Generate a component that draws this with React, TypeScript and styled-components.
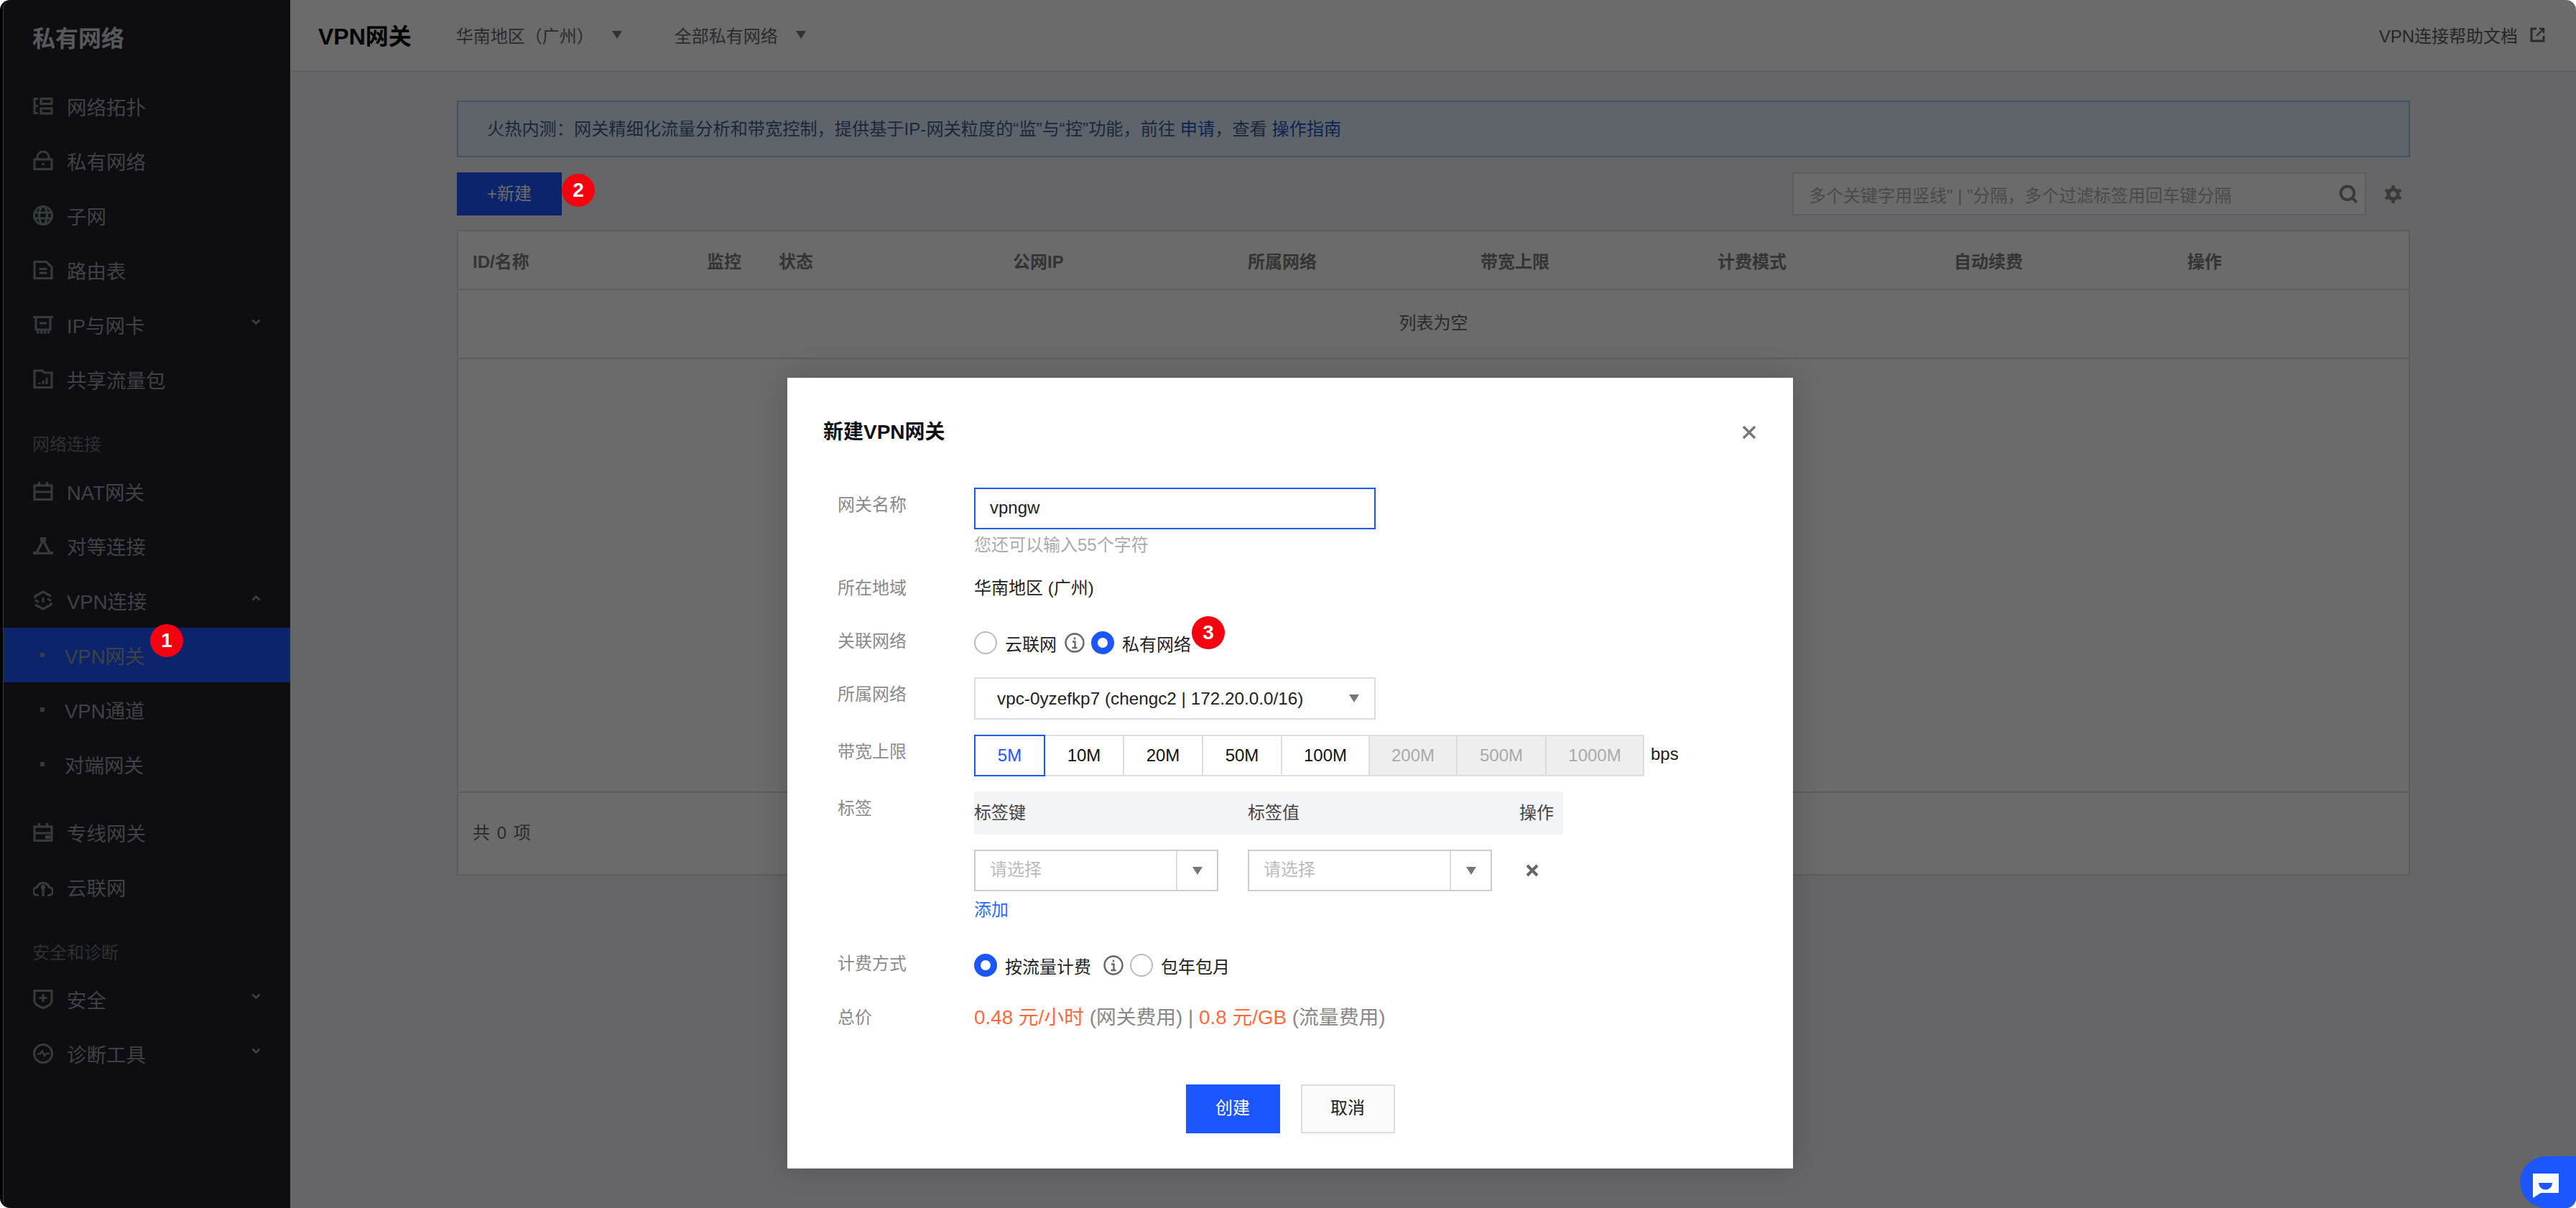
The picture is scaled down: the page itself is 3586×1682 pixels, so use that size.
import React from "react";
import styled, { createGlobalStyle } from "styled-components";
import { Search } from "lucide-react";

const GlobalStyle = createGlobalStyle`
  html, body {
    margin: 0;
    height: 100%;
    overflow: hidden;
    background: #fff;
  }
  * {
    box-sizing: border-box;
  }
  body {
    font-family: "Liberation Sans", "Noto Sans CJK SC", sans-serif;
    font-size: 24px;
  }
`;

const Shell = styled.div`
  position: relative;
  display: flex;
  width: 3586px;
  height: 1682px;
  border-left: 4px solid #000;
  border-radius: 14px;
  overflow: hidden;
`;

const Overlay = styled.div`
  position: absolute;
  inset: 0;
  z-index: 10;
  background: rgba(0, 0, 0, 0.58);
`;

const Badge = styled.span<{ $left: number; $top: number }>`
  position: absolute;
  left: ${(p) => p.$left}px;
  top: ${(p) => p.$top}px;
  z-index: 30;
  display: flex;
  align-items: center;
  justify-content: center;
  width: 46px;
  height: 46px;
  border-radius: 50%;
  background: #f5000f;
  color: #fff;
  font-size: 28px;
  font-weight: 700;
`;

/* sidebar */

const Sidebar = styled.aside`
  flex: none;
  width: 400px;
  border-left: 1px solid #8d8d8d;
  background: #1f212b;
  color: #979ea5;
`;

const SideTitle = styled.div`
  height: 110px;
  padding: 34px 0 0 40px;
  color: #cfd1d6;
  font-size: 32px;
  font-weight: 700;
  line-height: 40px;
`;

const GroupTitle = styled.div<{ $top: number }>`
  height: 80px;
  padding: ${(p) => p.$top}px 0 0 40px;
  color: #6d7179;
  font-size: 24px;
  line-height: 50px;
`;

const NavItem = styled.div<{ $active?: boolean; $gapBelow?: number }>`
  position: relative;
  display: flex;
  align-items: center;
  gap: 19px;
  height: 76px;
  margin-bottom: ${(p) => p.$gapBelow || 0}px;
  padding-left: 41px;
  font-size: 27.5px;
  white-space: nowrap;
  background: ${(p) => (p.$active ? "#1c56ff" : "transparent")};
`;

const SubItem = styled(NavItem)`
  gap: 28px;
  padding-left: 51px;
`;

const Dot = styled.i`
  width: 6px;
  height: 6px;
  background: currentColor;
  opacity: 0.8;
`;

const NavIcon = styled.svg`
  flex: none;
  width: 28px;
  height: 28px;
  fill: none;
  stroke: #7e8a91;
  stroke-width: 3.2;
`;

const Chevron = styled.svg<{ $up?: boolean }>`
  position: absolute;
  right: 41px;
  top: 30px;
  width: 13px;
  height: 9px;
  fill: none;
  stroke: #979ea5;
  stroke-width: 2.6;
  transform: ${(p) => (p.$up ? "rotate(180deg)" : "none")};
`;

const icons: Record<string, React.ReactNode> = {
  topology: (
    <>
      <path d="M2 2v23M2 3.5h5M2 13.5h5M2 23.5h5" />
      <rect x="11" y="3.5" width="15" height="7" />
      <rect x="11" y="17" width="15" height="7" />
    </>
  ),
  lock: (
    <>
      <rect x="2" y="12" width="24" height="13.5" />
      <path d="M6 12V9a8 8 0 0 1 16 0v3" />
      <path d="M12.5 17h3v3h-3z" fill="#7e8a91" stroke="none" />
    </>
  ),
  globe: (
    <>
      <circle cx="14" cy="14" r="12.5" />
      <ellipse cx="14" cy="14" rx="5.5" ry="12.5" />
      <path d="M2 10h24M2 18h24" />
    </>
  ),
  doc: (
    <>
      <path d="M2 2.5h16.5L26 10v15.5H2z" />
      <path d="M8.5 12.5h11M8.5 18h11" />
    </>
  ),
  card: (
    <>
      <path d="M0 3.5h28M4 3.5v17.5h20V3.5M9 12h10" />
      <path d="M5 24.5h18" strokeDasharray="3.5 1.5" strokeWidth="4" />
    </>
  ),
  folder: (
    <>
      <path d="M2 2h11l3 3h10v20.5H2z" />
      <path d="M9 21v-2M14 21v-5M19 21v-9" strokeWidth="3" />
    </>
  ),
  gateway: (
    <>
      <rect x="2" y="6" width="24" height="19.5" />
      <path d="M8.5 1v5M19.5 1v5M2 15h24" />
    </>
  ),
  peer: (
    <>
      <path d="M14 6L4.5 24.5h19z" />
      <path d="M10 2h8v6h-8zM0 22h8v4H0zM20 22h8v4h-8z" fill="#7e8a91" stroke="none" />
    </>
  ),
  vpn: (
    <>
      <path d="M3 11V8l11-6 11 6M25 17v3l-11 6-11-6" />
      <path d="M3 13.5l5 3M25 14.5l-5-3" />
      <path d="M12.5 10h3v7h-3z" fill="#7e8a91" stroke="none" />
    </>
  ),
  line: (
    <>
      <rect x="2" y="6" width="24" height="19.5" />
      <path d="M8.5 1v5M19.5 1v5M2 15h24" />
      <path d="M17 18h7v5h-7z" fill="#7e8a91" stroke="none" />
    </>
  ),
  cloud: (
    <>
      <path d="M8 25.5H6.5a5.5 5.5 0 0 1-1-11 9 9 0 0 1 17 0 5.5 5.5 0 0 1-1 11H20" />
      <path d="M14 27V15" strokeWidth="3.6" />
      <circle cx="14" cy="14" r="3.2" fill="#7e8a91" stroke="none" />
    </>
  ),
  shield: (
    <>
      <path d="M2 2.5h24v14c0 4.5-5 7.5-12 10-7-2.5-12-5.5-12-10z" />
      <path d="M14 7v11M8.5 12.5h11" />
    </>
  ),
  pulse: (
    <>
      <circle cx="14" cy="14" r="12.5" />
      <path d="M6 14.5h4l3-4 3 6.5 2.5-3H23" strokeWidth="2.6" />
    </>
  ),
};

const Item = ({ icon, label, open }: { icon: string; label: string; open?: boolean | "up" }) => (
  <NavItem>
    <NavIcon viewBox="0 0 28 28">{icons[icon]}</NavIcon>
    {label}
    {open && (
      <Chevron viewBox="0 0 13 9" $up={open === "up"}>
        <path d="M1.5 1.5L6.5 6.5L11.5 1.5" />
      </Chevron>
    )}
  </NavItem>
);

const Side = () => (
  <Sidebar>
    <SideTitle>私有网络</SideTitle>
    <Item icon="topology" label="网络拓扑" />
    <Item icon="lock" label="私有网络" />
    <Item icon="globe" label="子网" />
    <Item icon="doc" label="路由表" />
    <Item icon="card" label="IP与网卡" open />
    <Item icon="folder" label="共享流量包" />
    <GroupTitle $top={28}>网络连接</GroupTitle>
    <Item icon="gateway" label="NAT网关" />
    <Item icon="peer" label="对等连接" />
    <Item icon="vpn" label="VPN连接" open="up" />
    <SubItem $active>
      <Dot />
      VPN网关
      <Badge $left={204} $top={-5}>1</Badge>
    </SubItem>
    <SubItem>
      <Dot />
      VPN通道
    </SubItem>
    <SubItem $gapBelow={19}>
      <Dot />
      对端网关
    </SubItem>
    <Item icon="line" label="专线网关" />
    <Item icon="cloud" label="云联网" />
    <GroupTitle $top={29}>安全和诊断</GroupTitle>
    <Item icon="shield" label="安全" open />
    <Item icon="pulse" label="诊断工具" open />
  </Sidebar>
);

/* main page */

const Main = styled.main`
  flex: 1;
  display: flex;
  flex-direction: column;
  min-width: 0;
  background: #f3f4f7;
`;

const Header = styled.header`
  flex: none;
  display: flex;
  align-items: center;
  height: 100px;
  padding: 0 43px 2px 39px;
  border-bottom: 2px solid #e2e2e2;
  background: #fff;
  color: #666;
`;

const PageTitle = styled.h1`
  margin: 0 62px 0 0;
  color: #000;
  font-size: 32px;
  font-weight: 700;
`;

const Caret = styled.i<{ $color?: string }>`
  flex: none;
  width: 0;
  height: 0;
  border-style: solid;
  border-width: 11px 7.5px 0;
  border-color: ${(p) => p.$color || "#777"} transparent transparent;
`;

const HeaderPick = styled.div`
  display: flex;
  align-items: center;
  gap: 25px;
  margin-right: 73px;
`;

const HelpLink = styled.div`
  display: flex;
  align-items: center;
  gap: 17px;
  margin-left: auto;
  color: #5c5c5c;
`;

const Content = styled.div`
  flex: 1;
  display: flex;
  flex-direction: column;
  padding: 40px 231px 463px 232px;
`;

const Notice = styled.div`
  flex: none;
  height: 79px;
  margin-bottom: 21px;
  padding-left: 40px;
  border: 2px solid #a3c4f5;
  background: #e2eefc;
  color: #3f5f8f;
  font-size: 24.2px;
  line-height: 75px;
`;

const NoticeLink = styled.span`
  color: #1c56c8;
`;

const Toolbar = styled.div`
  flex: none;
  display: flex;
  align-items: center;
  height: 60px;
  margin-bottom: 20px;
  padding-right: 10px;
`;

const NewButton = styled.div`
  position: relative;
  width: 146px;
  height: 60px;
  margin-right: auto;
  background: #1c56ff;
  color: #fff;
  line-height: 60px;
  text-align: center;
`;

const SearchBox = styled.div`
  display: flex;
  align-items: center;
  justify-content: space-between;
  width: 799px;
  height: 60px;
  margin-right: 24px;
  padding: 0 9px 0 21px;
  border: 2px solid #ddd;
  background: #fff;
  color: #b0b0b0;
`;

const GearIcon = styled.svg`
  flex: none;
  width: 27px;
  height: 27px;
  fill: none;
  stroke: #8a8a8a;
`;

const Table = styled.div`
  flex: 1;
  display: flex;
  flex-direction: column;
  border: 2px solid #dcdcdc;
  background: #fff;
`;

const TableHead = styled.div`
  flex: none;
  display: grid;
  grid-template-columns: 326px 100px 326px 327px 324px 330px 329px 325px 1fr;
  align-items: center;
  height: 82px;
  padding-left: 20px;
  border-bottom: 2px solid #dcdcdc;
  color: #7c7c7c;
  font-weight: 700;
`;

const EmptyRow = styled.div`
  flex: none;
  height: 96px;
  border-bottom: 2px solid #dcdcdc;
  color: #666;
  line-height: 92px;
  text-align: center;
`;

const TableFoot = styled.div`
  flex: none;
  height: 115px;
  margin-top: auto;
  padding-left: 20px;
  border-top: 2px solid #dcdcdc;
  color: #666;
  line-height: 112px;
  word-spacing: 3px;
`;

const ChatButton = styled.div`
  position: absolute;
  right: 0;
  bottom: 0;
  z-index: 30;
  width: 78px;
  height: 72px;
  padding: 24px 0 0 18px;
  border-radius: 36px 0 0 36px;
  background: #1c56ff;
`;

const columns = ["ID/名称", "监控", "状态", "公网IP", "所属网络", "带宽上限", "计费模式", "自动续费", "操作"];

const Page = () => (
  <Main>
    <Header>
      <PageTitle>VPN网关</PageTitle>
      <HeaderPick>
        华南地区（广州）
        <Caret />
      </HeaderPick>
      <HeaderPick>
        全部私有网络
        <Caret />
      </HeaderPick>
      <HelpLink>
        VPN连接帮助文档
        <svg width="21" height="21" viewBox="0 0 21 21" fill="none" stroke="#666" strokeWidth="3">
          <path d="M9 2H2v17h17v-7" />
          <path d="M19 2L9 12M13 2h6v6" strokeWidth="2.4" />
        </svg>
      </HelpLink>
    </Header>
    <Content>
      <Notice>
        火热内测：网关精细化流量分析和带宽控制，提供基于IP-网关粒度的“监”与“控”功能，前往 <NoticeLink>申请</NoticeLink>，查看 <NoticeLink>操作指南</NoticeLink>
      </Notice>
      <Toolbar>
        <NewButton>
          +新建
          <Badge $left={146} $top={2}>2</Badge>
        </NewButton>
        <SearchBox>
          多个关键字用竖线" | "分隔，多个过滤标签用回车键分隔
          <Search size={28} color="#8a8a8a" strokeWidth={3.4} />
        </SearchBox>
        <GearIcon viewBox="0 0 28 28">
          <circle cx="14" cy="14" r="7" strokeWidth="5" />
          <path d="M14 1v6M14 21v6M2.7 7.5l5 3M20.3 17.5l5 3M2.7 20.5l5-3M20.3 10.5l5-3" strokeWidth="4.4" />
        </GearIcon>
      </Toolbar>
      <Table>
        <TableHead>
          {columns.map((name) => (
            <span key={name}>{name}</span>
          ))}
        </TableHead>
        <EmptyRow>列表为空</EmptyRow>
        <TableFoot>共 0 项</TableFoot>
      </Table>
    </Content>
    <ChatButton>
      <svg width="36" height="34" viewBox="0 0 36 34">
        <path d="M0 0H36V27H11L0 34Z" fill="#fff" />
        <path d="M8 13h19a9.5 9.5 0 0 1-19 0z" fill="#1c56ff" />
      </svg>
    </ChatButton>
  </Main>
);

/* dialog */

const Dialog = styled.section`
  position: absolute;
  left: 1092px;
  top: 526px;
  z-index: 20;
  width: 1400px;
  height: 1101px;
  padding: 56px 0 0 50px;
  background: #fff;
  box-shadow: 0 0 40px rgba(0, 0, 0, 0.18);
  color: #222;
`;

const DialogTitle = styled.h2`
  margin: 0 0 57px;
  color: #111;
  font-size: 28px;
  font-weight: 700;
  line-height: 40px;
`;

const CloseIcon = styled.svg`
  position: absolute;
  right: 51px;
  top: 66px;
  width: 20px;
  height: 20px;
  stroke: #777;
  stroke-width: 3.4;
`;

const Form = styled.div`
  display: flex;
  flex-direction: column;
  gap: 21px;
  margin-left: 20px;
`;

const Row = styled.div<{ $height: number }>`
  display: grid;
  grid-template-columns: 190px 1fr;
  height: ${(p) => p.$height}px;
`;

const Label = styled.div`
  color: #8a8a8a;
  line-height: 48px;
`;

const Plain = styled.div`
  line-height: 48px;
`;

const TextInput = styled.div`
  width: 559px;
  height: 58px;
  padding-left: 20px;
  border: 2px solid #1c56ff;
  line-height: 52px;
`;

const Hint = styled.div`
  color: #aaa;
  line-height: 44px;
`;

const RadioRow = styled.div`
  position: relative;
  display: flex;
  align-items: center;
  height: 52px;
`;

const Radio = styled.i<{ $checked?: boolean }>`
  flex: none;
  width: 32px;
  height: 32px;
  margin-right: 11px;
  border-radius: 50%;
  border: ${(p) => (p.$checked ? "9px solid #1c56ff" : "2px solid #bbb")};
`;

const InfoIcon = styled.svg<{ $gap: number }>`
  flex: none;
  width: 28px;
  height: 28px;
  margin: 0 9px 0 ${(p) => p.$gap}px;
  fill: none;
  stroke: #666;
  stroke-width: 2.4;
`;

const SelectBox = styled.div`
  display: flex;
  align-items: center;
  justify-content: space-between;
  width: 559px;
  height: 59px;
  padding: 0 21px 0 30px;
  border: 2px solid #ddd;
  font-size: 24.3px;
`;

const Segments = styled.div`
  display: flex;
  align-items: flex-start;
`;

const Segment = styled.div<{ $width: number; $selected?: boolean; $disabled?: boolean }>`
  position: relative;
  z-index: ${(p) => (p.$selected ? 1 : 0)};
  width: ${(p) => p.$width}px;
  height: 58px;
  margin-right: -2px;
  border: 2px solid ${(p) => (p.$selected ? "#1c56ff" : "#ddd")};
  background: ${(p) => (p.$disabled ? "#eee" : "#fff")};
  color: ${(p) => (p.$selected ? "#1c56ff" : p.$disabled ? "#aaa" : "#111")};
  line-height: 54px;
  text-align: center;
`;

const Unit = styled.span`
  margin: -2px 0 0 11px;
  line-height: 58px;
`;

const TagHead = styled.div`
  display: grid;
  grid-template-columns: 381px 1fr auto;
  width: 820px;
  height: 60px;
  padding-right: 13px;
  background: #f3f4f8;
  color: #444;
  line-height: 60px;
`;

const TagRow = styled.div`
  display: flex;
  align-items: center;
  gap: 41px;
  height: 58px;
  margin-top: 21px;
`;

const TagSelect = styled.div`
  display: grid;
  grid-template-columns: 1fr 57px;
  width: 340px;
  height: 58px;
  border: 2px solid #ccc;
  color: #bbb;
  line-height: 52px;
`;

const TagValue = styled.span`
  padding-left: 20px;
`;

const TagArrow = styled.span`
  display: flex;
  align-items: center;
  justify-content: center;
  border-left: 2px solid #ddd;
`;

const RemoveIcon = styled.svg`
  width: 18px;
  height: 18px;
  margin-left: 6px;
  stroke: #666;
  stroke-width: 4;
`;

const AddLink = styled.div`
  margin: 6px 0 10px;
  color: #2a6bff;
  line-height: 40px;
`;

const Price = styled.div`
  color: #888;
  font-size: 27.8px;
  line-height: 48px;
  white-space: nowrap;
`;

const PriceValue = styled.span`
  color: #ff6a3d;
`;

const Footer = styled.div`
  display: flex;
  justify-content: center;
  gap: 29px;
  margin-top: 69px;
  padding-right: 50px;
`;

const DialogButton = styled.div<{ $primary?: boolean }>`
  width: 131px;
  height: 68px;
  border: 2px solid ${(p) => (p.$primary ? "#1c56ff" : "#ddd")};
  background: ${(p) => (p.$primary ? "#1c56ff" : "#fafafa")};
  color: ${(p) => (p.$primary ? "#fff" : "#222")};
  line-height: 62px;
  text-align: center;
`;

const Info = ({ gap }: { gap: number }) => (
  <InfoIcon viewBox="0 0 28 28" $gap={gap}>
    <circle cx="14" cy="14" r="12.5" />
    <path d="M11 12.5h3.5V21M10.5 21h7M14 6.5v3" />
  </InfoIcon>
);

const Tag = () => (
  <TagSelect>
    <TagValue>请选择</TagValue>
    <TagArrow>
      <Caret />
    </TagArrow>
  </TagSelect>
);

const bandwidths = [
  { label: "5M", width: 99, selected: true },
  { label: "10M", width: 112 },
  { label: "20M", width: 112 },
  { label: "50M", width: 112 },
  { label: "100M", width: 124 },
  { label: "200M", width: 124, disabled: true },
  { label: "500M", width: 126, disabled: true },
  { label: "1000M", width: 138, disabled: true },
];

const NewGatewayDialog = () => (
  <Dialog>
    <DialogTitle>新建VPN网关</DialogTitle>
    <CloseIcon viewBox="0 0 20 20">
      <path d="M2 2L18 18M18 2L2 18" />
    </CloseIcon>
    <Form>
      <Row $height={95}>
        <Label>网关名称</Label>
        <div>
          <TextInput>vpngw</TextInput>
          <Hint>您还可以输入55个字符</Hint>
        </div>
      </Row>
      <Row $height={53}>
        <Label>所在地域</Label>
        <Plain>华南地区 (广州)</Plain>
      </Row>
      <Row $height={53}>
        <Label>关联网络</Label>
        <RadioRow>
          <Radio />
          云联网
          <Info gap={11} />
          <Radio $checked />
          私有网络
          <Badge $left={303} $top={-11}>3</Badge>
        </RadioRow>
      </Row>
      <Row $height={59}>
        <Label>所属网络</Label>
        <SelectBox>
          vpc-0yzefkp7 (chengc2 | 172.20.0.0/16)
          <Caret />
        </SelectBox>
      </Row>
      <Row $height={58}>
        <Label>带宽上限</Label>
        <Segments>
          {bandwidths.map((b) => (
            <Segment key={b.label} $width={b.width} $selected={b.selected} $disabled={b.disabled}>
              {b.label}
            </Segment>
          ))}
          <Unit>bps</Unit>
        </Segments>
      </Row>
      <Row $height={195}>
        <Label>标签</Label>
        <div>
          <TagHead>
            <span>标签键</span>
            <span>标签值</span>
            <span>操作</span>
          </TagHead>
          <TagRow>
            <Tag />
            <Tag />
            <RemoveIcon viewBox="0 0 18 18">
              <path d="M2 2L16 16M16 2L2 16" />
            </RemoveIcon>
          </TagRow>
          <AddLink>添加</AddLink>
        </div>
      </Row>
      <Row $height={54}>
        <Label>计费方式</Label>
        <RadioRow>
          <Radio $checked />
          按流量计费
          <Info gap={17} />
          <Radio />
          包年包月
        </RadioRow>
      </Row>
      <Row $height={48}>
        <Label>总价</Label>
        <Price>
          <PriceValue>0.48 元/小时</PriceValue> (网关费用) | <PriceValue>0.8 元/GB</PriceValue> (流量费用)
        </Price>
      </Row>
    </Form>
    <Footer>
      <DialogButton $primary>创建</DialogButton>
      <DialogButton>取消</DialogButton>
    </Footer>
  </Dialog>
);

const App = () => (
  <>
    <GlobalStyle />
    <Shell>
      <Side />
      <Page />
      <Overlay />
      <NewGatewayDialog />
    </Shell>
  </>
);

export default App;
